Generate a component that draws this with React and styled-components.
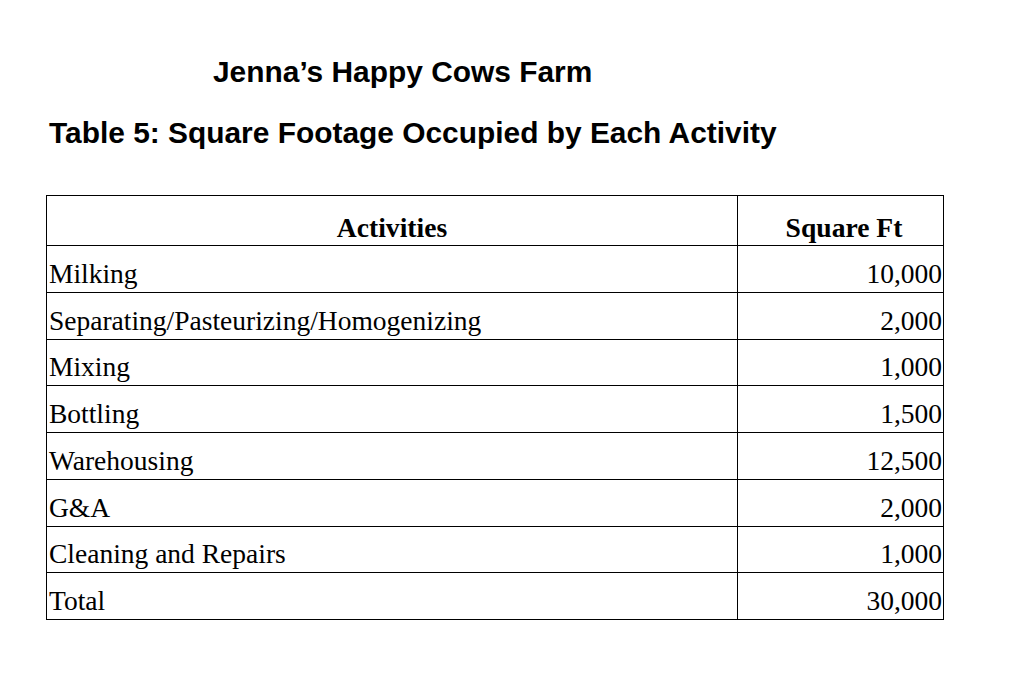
import React from "react";
import styled, { createGlobalStyle } from "styled-components";

const Global = createGlobalStyle`
  html, body { margin: 0; padding: 0; background: #fff; }
  body { font-family: "Liberation Serif", "Times New Roman", serif; color: #000; }
`;

const Page = styled.div`
  width: 1036px;
  height: 676px;
  box-sizing: border-box;
  padding: 55px 0 0 46px;
  background: #fff;
`;

const Heading = styled.h1`
  margin: 0 0 0 ${(p) => p.$indent || 0}px;
  font-family: "Liberation Sans", Arial, sans-serif;
  font-weight: 700;
  font-size: 29.9px;
  line-height: 34px;
  color: #000;
`;

const SubHeading = styled(Heading).attrs({ as: "h2" })`
  margin-top: 27px;
  margin-left: 3px;
`;

const Table = styled.table`
  margin-top: 45px;
  border-collapse: collapse;
  table-layout: fixed;
  width: 897px;
  font-family: "Liberation Serif", "Times New Roman", serif;
  font-size: 27.5px;
`;

const Col = styled.col`
  width: ${(p) => p.$w}px;
`;

const HeadCell = styled.th`
  border: 1px solid #000;
  height: 47px;
  padding: 0 0 2px ${(p) => p.$shift || 0}px;
  vertical-align: bottom;
  text-align: center;
  font-weight: 700;
  font-size: 27.6px;
  line-height: 30px;
`;

const Cell = styled.td`
  border: 1px solid #000;
  height: 42.75px;
  padding: 0 1px 3px 2px;
  vertical-align: bottom;
  line-height: 31px;
  white-space: nowrap;
  text-align: ${(p) => (p.$num ? "right" : "left")};
`;

const rows = [
  ["Milking", "10,000"],
  ["Separating/Pasteurizing/Homogenizing", "2,000"],
  ["Mixing", "1,000"],
  ["Bottling", "1,500"],
  ["Warehousing", "12,500"],
  ["G&A", "2,000"],
  ["Cleaning and Repairs", "1,000"],
  ["Total", "30,000"],
];

export default function App() {
  return (
    <Page>
      <Global />
      <Heading $indent={167}>Jenna’s Happy Cows Farm</Heading>
      <SubHeading>Table 5: Square Footage Occupied by Each Activity</SubHeading>
      <Table>
        <colgroup>
          <Col $w={691} />
          <Col $w={206} />
        </colgroup>
        <thead>
          <tr>
            <HeadCell>Activities</HeadCell>
            <HeadCell $shift={7}>Square Ft</HeadCell>
          </tr>
        </thead>
        <tbody>
          {rows.map(([a, v]) => (
            <tr key={a}>
              <Cell>{a}</Cell>
              <Cell $num>{v}</Cell>
            </tr>
          ))}
        </tbody>
      </Table>
    </Page>
  );
}
